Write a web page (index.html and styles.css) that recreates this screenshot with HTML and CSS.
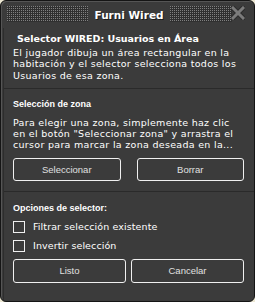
FILE: index.html
```html
<!DOCTYPE html>
<html>
<head>
<meta charset="utf-8">
<link rel="stylesheet" href="styles.css">
</head>
<body>
<div class="window">
  <div class="titlebar">
    <div class="dots"></div>
    <div class="title">Furni Wired</div>
    <div class="dots right"></div>
    <svg class="close" width="14" height="14" viewBox="0 0 14 14">
      <path d="M2 2 L12 12 M12 2 L2 12" stroke="#2c2c2c" stroke-width="5" stroke-linecap="square"/>
      <path d="M2 2 L12 12 M12 2 L2 12" stroke="#7b7b7b" stroke-width="3" stroke-linecap="square"/>
    </svg>
  </div>
  <div class="content">
    <section class="intro">
      <h1 class="heading">Selector WIRED: Usuarios en Área</h1>
      <p class="text">El jugador dibuja un área rectangular en la habitación y el selector selecciona todos los Usuarios de esa zona.</p>
    </section>
    <section class="zone">
      <h2 class="label">Selección de zona</h2>
      <p class="text">Para elegir una zona, simplemente haz clic en el botón "Seleccionar zona" y arrastra el cursor para marcar la zona deseada en la...</p>
      <div class="btnrow wide">
        <button class="btn">Seleccionar</button>
        <button class="btn">Borrar</button>
      </div>
    </section>
    <section class="options">
      <h2 class="label">Opciones de selector:</h2>
      <label class="check"><span class="box"></span>Filtrar selección existente</label>
      <label class="check"><span class="box"></span>Invertir selección</label>
      <div class="btnrow">
        <button class="btn tall">Listo</button>
        <button class="btn tall">Cancelar</button>
      </div>
    </section>
  </div>
</div>
</body>
</html>
```

FILE: styles.css
```css
html, body {
  margin: 0;
  padding: 0;
  background: #ece7d2;
}
.window {
  width: 255px;
  height: 302px;
  box-sizing: border-box;
  background: #3b3b3b;
  border: 1px solid #151515;
  border-radius: 6px;
  box-shadow: inset 1px 1px 0 #555;
  display: flex;
  flex-direction: column;
  overflow: hidden;
  font-family: "DejaVu Sans", sans-serif;
  color: #fff;
}
.titlebar {
  height: 27px;
  display: flex;
  align-items: center;
  position: relative;
  padding: 0 6px;
}
.dots {
  width: 81px;
  height: 16px;
  margin-top: -1px;
  background-image: radial-gradient(circle at 0.5px 0.5px, #808080 0.7px, transparent 0.9px);
  background-size: 2px 2px;
  background-color: #303030;
}
.dots.right {
  width: 62px;
  margin-left: auto;
  margin-right: 16px;
}
.title {
  flex: 1;
  text-align: center;
  font-weight: bold;
  font-size: 10.5px;
  text-shadow: 1px 1px 0 #1c1c1c;
}
.close {
  position: absolute;
  right: 9px;
  top: 5px;
}
.content {
  flex: 1;
  margin-left: 2px;
  border-left: 1px solid #2d2d2d;
  display: flex;
  flex-direction: column;
}
section {
  padding: 0 10px 0 9px;
}
.intro {
  padding-top: 4px;
  padding-bottom: 7px;
  border-bottom: 1px solid #2a2a2a;
}
.heading {
  margin: 0 0 2px 4px;
  font-size: 9.5px;
  font-weight: bold;
  line-height: 13px;
}
.text {
  margin: 0;
  font-size: 9.5px;
  letter-spacing: 0.3px;
  line-height: 11.3px;
}
.zone {
  padding-top: 9px;
  padding-bottom: 10px;
  border-bottom: 1px solid #2a2a2a;
}
.label {
  margin: 0 0 7px;
  font-family: "Liberation Sans", sans-serif;
  font-size: 9px;
  font-weight: bold;
  line-height: 12px;
}
.zone .label { margin-bottom: 7px; }
.btnrow {
  display: flex;
  gap: 5px;
  margin-top: 9px;
}
.btnrow.wide { gap: 16px; margin-top: 7px; }
.btn {
  flex: 1;
  height: 23px;
  background: #3b3b3b;
  border: 1px solid #f0f0f0;
  border-radius: 3px;
  color: #e0e0e0;
  font-family: "Liberation Sans", sans-serif;
  font-size: 9.5px;
  padding: 0;
}
.btn.tall { height: 24px; }
.options {
  padding-top: 10px;
}
.options .label { margin-bottom: 7px; }
.check {
  display: flex;
  align-items: center;
  gap: 8px;
  height: 12px;
  margin: 0 0 7px 0;
  font-size: 9.5px;
  letter-spacing: 0.1px;
}
.box {
  width: 10px;
  height: 10px;
  border: 1px solid #f0f0f0;
}
.options .btnrow { margin-top: 6px; }
```
